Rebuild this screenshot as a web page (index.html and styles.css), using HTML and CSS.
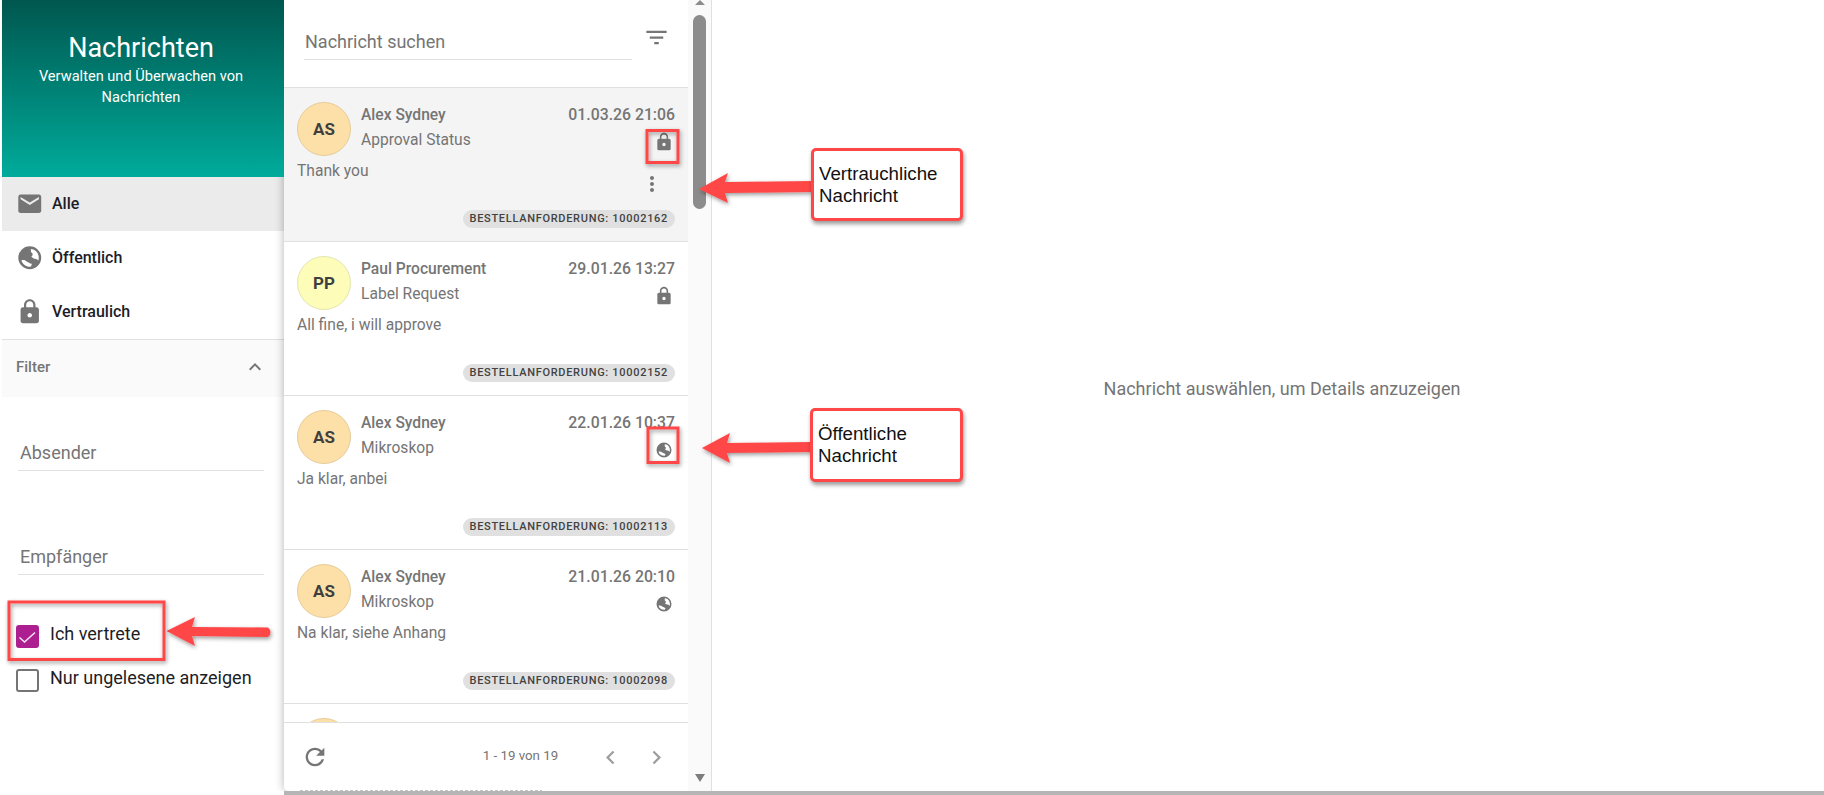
FILE: index.html
```html
<!DOCTYPE html>
<html lang="de">
<head>
<meta charset="utf-8">
<title>Nachrichten</title>
<link rel="stylesheet" href="styles.css">
</head>
<body>
<svg width="0" height="0" class="defs">
  <symbol id="i-mail" viewBox="0 0 24 24"><path d="M20 4H4c-1.100 0-2 .9-2 2v12c0 1.100.9 2 2 2h16c1.100 0 2-.9 2-2V6c0-1.100-.9-2-2-2zm0 4-8 5-8-5V6l8 5 8-5v2z"/></symbol>
  <symbol id="i-globe" viewBox="0 0 24 24"><path fill-rule="evenodd" d="M12 2a10 10 0 1 0 0 20a10 10 0 1 0 0-20zM13 4.300C16 4.500 18.600 6.300 19.500 9.500C20 11 20 12.500 19.500 14.500C18.700 13.300 17.300 12.800 15.800 12.800L13.300 11.200C14.900 10 15 7.500 13 7.200ZM4.700 14.300C6 13.500 8.300 13.800 9.500 15.400C11 15.700 12.500 17.300 14 17.300C13.500 18.200 13.300 19.200 13.200 19.700C9.300 20.200 5.800 17.800 4.700 14.300Z"/></symbol>
  <symbol id="i-lock" viewBox="0 0 24 24"><path d="M18 8h-1V6c0-2.760-2.240-5-5-5S7 3.240 7 6v2H6c-1.100 0-2 .9-2 2v10c0 1.100.9 2 2 2h12c1.100 0 2-.9 2-2V10c0-1.100-.9-2-2-2zm-6 9c-1.100 0-2-.9-2-2s.9-2 2-2 2 .9 2 2-.9 2-2 2zm3.100-9H8.900V6c0-1.710 1.390-3.100 3.100-3.100 1.710 0 3.100 1.390 3.100 3.100v2z"/></symbol>
</svg>

<div class="app">
  <aside class="sidebar">
    <header class="hero">
      <h1 class="hero-title">Nachrichten</h1>
      <p class="hero-sub">Verwalten und Überwachen von Nachrichten</p>
    </header>
    <nav class="nav">
      <a class="nav-item is-active"><svg class="nav-icon"><use href="#i-mail"/></svg>Alle</a>
      <a class="nav-item"><svg class="nav-icon"><use href="#i-globe"/></svg>Öffentlich</a>
      <a class="nav-item"><svg class="nav-icon"><use href="#i-lock"/></svg>Vertraulich</a>
    </nav>
    <div class="filter-head">
      <span>Filter</span>
      <svg class="chev" viewBox="0 0 24 24"><path d="M7.410 15.410 12 10.830l4.590 4.580L18 14l-6-6-6 6z"/></svg>
    </div>
    <div class="filter-body">
      <div class="field">Absender</div>
      <div class="field">Empfänger</div>
      <label class="check check-first"><span class="box box-on"><svg viewBox="0 0 19 19"><path d="M1.500 10.500L6.500 15L17 5.500" fill="none" stroke="#f6e6f3" stroke-width="1.500"/></svg></span><span class="check-label">Ich vertrete</span></label>
      <label class="check"><span class="box"></span><span class="check-label">Nur ungelesene anzeigen</span></label>
    </div>
  </aside>

  <div class="workspace">
    <section class="list-panel">
      <div class="list-col">
        <div class="search-bar">
          <div class="search-field">Nachricht suchen</div>
          <svg class="filter-icon" viewBox="0 0 24 24"><path d="M10 18h4v-2h-4v2zM3 6v2h18V6H3zm3 7h12v-2H6v2z"/></svg>
        </div>
        <div class="items">
          <article class="item is-selected">
            <div class="avatar av-orange">AS</div>
            <div class="item-main">
              <div class="row"><span class="name">Alex Sydney</span><span class="date">01.03.26 21:06</span></div>
              <div class="row"><span class="subject">Approval Status</span><svg class="kind"><use href="#i-lock"/></svg></div>
            </div>
            <p class="body">Thank you</p>
            <svg class="more" viewBox="0 0 24 24"><path d="M12 8c1.100 0 2-.9 2-2s-.9-2-2-2-2 .9-2 2 .9 2 2 2zm0 2c-1.100 0-2 .9-2 2s.9 2 2 2 2-.9 2-2-.9-2-2-2zm0 6c-1.100 0-2 .9-2 2s.9 2 2 2 2-.9 2-2-.9-2-2-2z"/></svg>
            <span class="chip">BESTELLANFORDERUNG: 10002162</span>
          </article>
          <article class="item">
            <div class="avatar av-yellow">PP</div>
            <div class="item-main">
              <div class="row"><span class="name">Paul Procurement</span><span class="date">29.01.26 13:27</span></div>
              <div class="row"><span class="subject">Label Request</span><svg class="kind"><use href="#i-lock"/></svg></div>
            </div>
            <p class="body">All fine, i will approve</p>
            <span class="chip">BESTELLANFORDERUNG: 10002152</span>
          </article>
          <article class="item">
            <div class="avatar av-orange">AS</div>
            <div class="item-main">
              <div class="row"><span class="name">Alex Sydney</span><span class="date">22.01.26 10:37</span></div>
              <div class="row"><span class="subject">Mikroskop</span><svg class="kind kind-globe"><use href="#i-globe"/></svg></div>
            </div>
            <p class="body">Ja klar, anbei</p>
            <span class="chip">BESTELLANFORDERUNG: 10002113</span>
          </article>
          <article class="item">
            <div class="avatar av-orange">AS</div>
            <div class="item-main">
              <div class="row"><span class="name">Alex Sydney</span><span class="date">21.01.26 20:10</span></div>
              <div class="row"><span class="subject">Mikroskop</span><svg class="kind kind-globe"><use href="#i-globe"/></svg></div>
            </div>
            <p class="body">Na klar, siehe Anhang</p>
            <span class="chip">BESTELLANFORDERUNG: 10002098</span>
          </article>
          <article class="item">
            <div class="avatar av-orange"></div>
          </article>
        </div>
        <footer class="pager">
          <svg class="refresh" viewBox="0 0 24 24"><path d="M17.650 6.350C16.200 4.900 14.210 4 12 4c-4.420 0-7.990 3.580-7.990 8s3.570 8 7.990 8c3.730 0 6.840-2.550 7.730-6h-2.080c-.82 2.330-3.040 4-5.650 4-3.310 0-6-2.690-6-6s2.690-6 6-6c1.660 0 3.140.69 4.220 1.780L13 11h7V4l-2.350 2.350z"/></svg>
          <span class="pager-text">1 - 19 von 19</span>
          <svg class="pager-btn" viewBox="0 0 24 24"><path d="M15.410 7.410 14 6l-6 6 6 6 1.410-1.410L10.830 12z"/></svg>
          <svg class="pager-btn" viewBox="0 0 24 24"><path d="M10 6 8.590 7.410 13.170 12l-4.580 4.590L10 18l6-6z"/></svg>
        </footer>
      </div>
      <div class="scrollbar">
        <span class="sb-up"></span>
        <span class="sb-thumb"></span>
        <span class="sb-down"></span>
      </div>
    </section>
    <main class="detail">Nachricht auswählen, um Details anzuzeigen</main>
  </div>
</div>

<svg class="arrows" width="1824" height="795" viewBox="0 0 1824 795">
  <defs><filter id="sh" x="-20%" y="-50%" width="140%" height="200%"><feDropShadow dx="1" dy="2" stdDeviation="2" flood-color="#000" flood-opacity=".4"/></filter></defs>
  <g filter="url(#sh)" fill="#ff4747">
    <path d="M699 189 L728 173 L725 182 L812 181 L812 192 L725 193 L728 203 Z"/>
    <path d="M702 448 L730 433 L727 443 L812 442 L812 452 L727 453 L730 463 Z"/>
    <path d="M166.500 631 L195 617 L192 627 L268 627.500 Q273 632 268 637 L192 636 L195 646 Z"/>
  </g>
  <g filter="url(#sh)" fill="none" stroke="#ff4747" stroke-width="3">
    <rect x="647" y="130.500" width="31" height="32"/>
    <rect x="648" y="428" width="30" height="34.500"/>
    <rect x="9" y="602" width="155" height="57.500"/>
  </g>
</svg>
<div class="callout callout-a">Vertrauchliche<br>Nachricht</div>
<div class="callout callout-b">Öffentliche<br>Nachricht</div>
</body>
</html>
```
FILE: styles.css
```css
* { box-sizing: border-box; }
html, body { margin: 0; height: 100%; overflow: hidden; background: #fff; }
body { font-family: Roboto, "Liberation Sans", sans-serif; color: #1d1d26; }
.defs { position: absolute; }

.app { display: flex; height: 795px; padding-left: 2px; }

.sidebar { width: 282px; flex: none; display: flex; flex-direction: column; }
.hero { height: 177px; padding: 32px 24px 0 20px; text-align: center; color: #fff; position: relative; z-index: 2;
  background: linear-gradient(180deg, #00574f 0%, #00ab9b 100%); }
.hero-title { margin: 0; font-size: 27px; font-weight: 400; line-height: 32px; }
.hero-sub { margin: 2px 0 0; font-size: 14.600px; line-height: 21px; }

.nav { display: flex; flex-direction: column; border-bottom: 1px solid #e0e0e0; }
.nav-item { height: 54px; display: flex; align-items: center; padding: 0 0 1px 14px; gap: 8.500px;
  font-size: 16px; font-weight: 500; color: #1d1d26; }
.nav-item.is-active { background: #ebebeb; }
.nav-icon { width: 27.500px; height: 27.500px; fill: #757575; }

.filter-head { height: 57px; background: #fafafa; display: flex; align-items: center;
  justify-content: space-between; padding: 0 21px 3px 14px; font-size: 15px; font-weight: 500; color: #757575; }
.chev { width: 24px; height: 24px; fill: #757575; margin-right: -4px; }

.filter-body { display: flex; flex-direction: column; }
.field { margin: 34px 20px 0 16px; height: 40px; border-bottom: 1px solid #e0e0e0; font-size: 18px;
  color: #757575; padding: 12px 2px 0; line-height: 20px; }
.field + .field { margin-top: 63px; height: 41px; padding-top: 13px; }
.check { display: flex; align-items: center; gap: 11px; font-size: 18px; height: 44px; padding-left: 14px; color: #1d1d26; }
.check-label { margin-bottom: 6px; }
.check-first { margin-top: 39px; }
.box { width: 23px; height: 23px; border: 2px solid #757575; border-radius: 3px; display: block; flex: none; }
.box-on { background: #ad1f91; border-color: #ad1f91; }
.box-on svg { display: block; width: 19px; height: 19px; }

.workspace { flex: 1; min-width: 0; display: flex; height: 795px; border-bottom: 4px solid #b5b5b5; }

.list-panel { width: 428px; height: 791px; flex: none; display: flex; background: #fff;
  border-right: 1px solid #e0e0e0; border-bottom-left-radius: 5px; position: relative; z-index: 1;
  box-shadow: 0 0 10px rgba(0,0,0,.3); clip-path: inset(0 0 0 -14px); overflow: hidden; }
.list-col { width: 404px; display: flex; flex-direction: column; }
.search-bar { height: 87px; flex: none; display: flex; padding-left: 20px; }
.search-field { width: 328px; flex: none; height: 60px; padding: 31px 1px 0; border-bottom: 1px solid #e0e0e0;
  font-size: 18px; line-height: 22px; color: #757575; }
.filter-icon { width: 27px; height: 27px; flex: none; fill: #757575; margin: 24px 0 0 11px; }

.items { flex: 1; min-height: 0; overflow: hidden; border-top: 1px solid #e0e0e0; }
.item { height: 154px; border-bottom: 1px solid #e0e0e0; padding: 14px 13px 0 13px;
  display: grid; grid-template-columns: 54px 1fr; column-gap: 10px; position: relative; align-content: start; }
.item.is-selected { background: #f4f4f4; }
.avatar { width: 54px; height: 54px; border-radius: 50%; display: flex; align-items: center; justify-content: center;
  font-size: 17px; font-weight: 700; color: #3f3f3f; }
.av-orange { background: #fde0a8; border: 1px solid #e6cc9c; }
.av-yellow { background: #fdfdb9; border: 1px solid #e3e6b0; }
.item-main { min-width: 0; }
.row { display: flex; justify-content: space-between; align-items: center; height: 25px; }
.name { font-size: 15.600px; font-weight: 500; color: #757575; }
.date { font-size: 15.800px; font-weight: 500; color: #757575; }
.subject { font-size: 15.600px; color: #757575; margin-top: 1px; }
.kind { width: 20px; height: 20px; fill: #757575; margin: 5px 1px 0 0; }
.kind-globe { width: 18px; height: 18px; margin-right: 2px; }
.body { grid-column: 1 / -1; margin: 5px 0 0; font-size: 15.600px; line-height: 21px; color: #757575; }
.more { position: absolute; right: 24px; top: 84px; width: 24px; height: 24px; fill: #757575; }
.chip { position: absolute; right: 13px; top: 122px; height: 18px; padding: 0 7px; border-radius: 9px; background: #e0e0e0;
  font-size: 11px; font-weight: 500; letter-spacing: .7px; line-height: 18px; color: #424242; white-space: nowrap; }

.pager { height: 69px; flex: none; border-top: 1px solid #e0e0e0; background: #fff; display: flex; align-items: center;
  padding: 0 0 0 17px; position: relative; }
.pager::after { content: ""; position: absolute; left: 16px; bottom: 0; width: 242px; height: 1px;
  background: repeating-linear-gradient(90deg, #c4c4c4 0 3px, transparent 3px 5px); }
.refresh { width: 28px; height: 28px; fill: #757575; margin-right: 153.700px; }
.pager-text { font-size: 13.300px; color: #757575; width: 110px; margin-top: -3px; }
.pager-btn { width: 27px; height: 27px; fill: #9e9e9e; margin-left: 4.800px; }
.pager-btn:last-child { margin-left: 18.700px; }

.scrollbar { flex: 1; background: #fafafa; position: relative; display: flex; flex-direction: column; align-items: center; }
.sb-thumb { width: 13px; height: 194px; margin-top: 15px; border-radius: 7px; background: #8c8c8c; }
.sb-up, .sb-down { width: 0; height: 0; border-left: 5.500px solid transparent; border-right: 5.500px solid transparent; position: absolute; }
.sb-up { top: 0; border-bottom: 5px solid #8c8c8c; }
.sb-down { bottom: 9px; border-top: 8px solid #7d7d7d; }

.detail { flex: 1; height: 791px; display: flex; align-items: center; justify-content: center; font-size: 18px; color: #757575;
  padding: 0 0 15px 28px; }

.arrows { position: absolute; left: 0; top: 0; z-index: 3; pointer-events: none; }
.callout { position: absolute; z-index: 4; background: #fff; border: 3.500px solid #ff4747; border-radius: 5px;
  box-shadow: 1px 3px 4px rgba(0,0,0,.4); font-family: "Liberation Sans", Arial, sans-serif; font-size: 18.700px; line-height: 22px; color: #111; }
.callout-a { left: 811px; top: 148px; width: 152px; height: 73px; padding: 12px 0 0 5px; }
.callout-b { left: 810px; top: 408px; width: 153px; height: 74px; padding: 12px 0 0 5px; }
```
